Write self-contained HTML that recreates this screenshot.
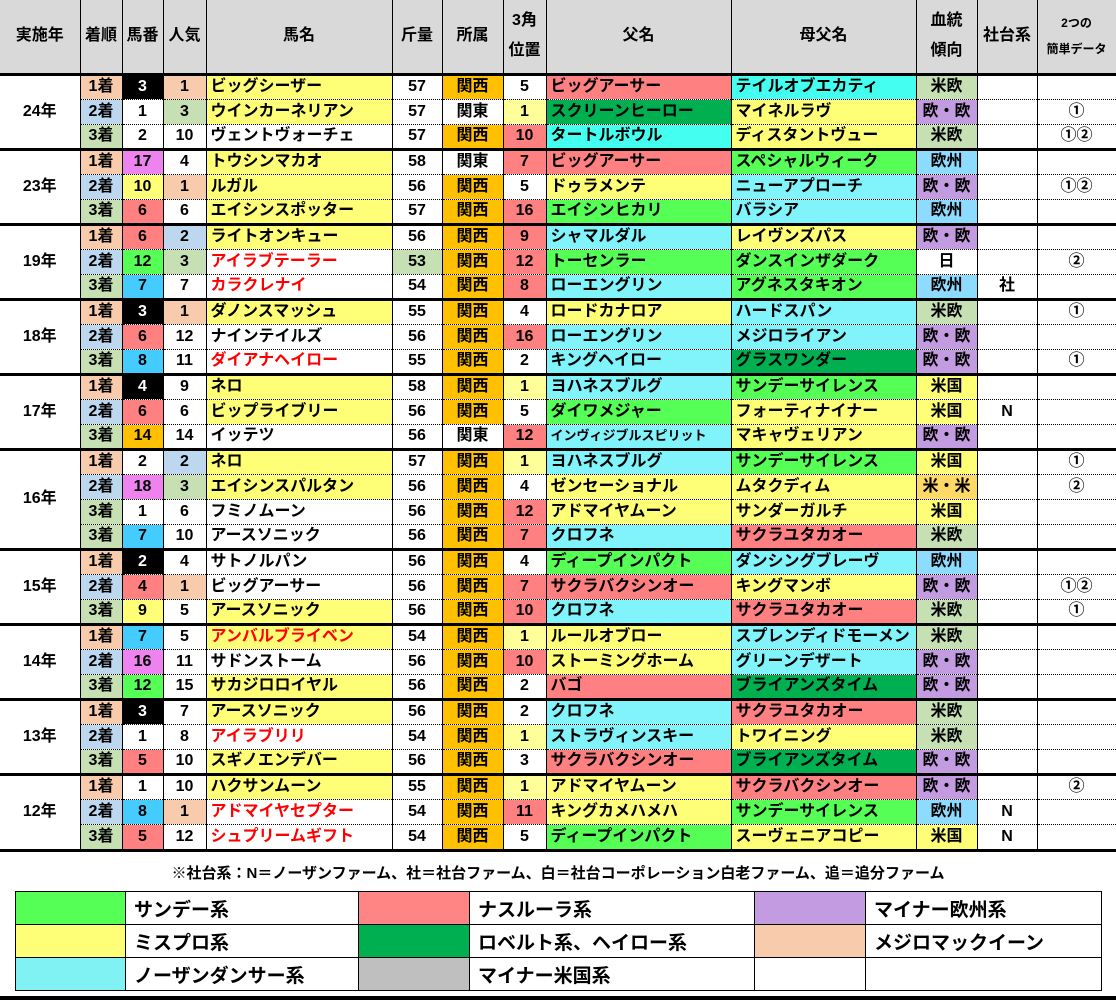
<!DOCTYPE html>
<html><head><meta charset="utf-8"><style>
*{margin:0;padding:0;box-sizing:border-box}
body{width:1116px;height:1001px;background:#fff;font-family:"Liberation Sans","Noto Sans CJK JP",sans-serif;font-weight:bold;color:#000;position:relative;overflow:hidden}
table.m{position:absolute;left:0;top:0;width:1116px;border-collapse:collapse;table-layout:fixed}
table.m td,table.m th{border-left:1px solid #000;border-right:1px solid #000;border-top:1px dotted #000;height:25px;font-size:16px;text-align:center;white-space:nowrap;overflow:hidden;padding:0;line-height:22px;background-color:#fff}
table.m th{background:#d9d9d9;height:74px;border-top:none;border-bottom:3px solid #000;line-height:30px}
table.m tr.gr td{border-top:3px solid #000}
table.m td.l{text-align:left;padding-left:4px}
table.m td.yr{background:#fff;border-left:none}
table.m th.yr{border-left:none}
table.m td.y{background:#ffff77}table.m td.r{background:#ff8080}table.m td.dg{background:#00b050}table.m td.c{background:#80f4fa}table.m td.c2{background:#44fff0}table.m td.g{background:#55ff55}
table.m td.s{background:#f8cbad}table.m td.b{background:#bdd7ee}table.m td.lg{background:#c6e0b4}table.m td.o{background:#ffc000}table.m td.pk{background:#ee82ee}table.m td.cy{background:#44ccff}
table.m td.bk{background:#000;color:#fff}table.m td.pu{background:#c39be0}table.m td.eu{background:#8ddcff}table.m td.ly{background:#ffff99}table.m td.lo{background:#ffd966}
.rd{color:#f00}
.sm{font-size:13px!important}
.note{position:absolute;top:862px;left:0;width:1116px;text-align:center;font-size:15px}
table.lg2{position:absolute;left:15px;top:891px;width:1086px;border-collapse:collapse;table-layout:fixed}
table.lg2 td{border:1px solid #000;height:33px;font-size:19px;padding-left:8px;white-space:nowrap}
.bot{position:absolute;left:0;top:996px;width:1116px;height:4px;background:#000}
.tl{position:absolute;left:0;top:849px;width:1116px;height:3px;background:#000}
</style></head><body>
<table class="m">
<colgroup><col style="width:80px"><col style="width:42px"><col style="width:41px"><col style="width:43px"><col style="width:186px"><col style="width:50px"><col style="width:61px"><col style="width:43px"><col style="width:185px"><col style="width:185px"><col style="width:61px"><col style="width:60px"><col style="width:79px"></colgroup>
<tr><th class="yr">実施年</th><th>着順</th><th>馬番</th><th>人気</th><th>馬名</th><th>斤量</th><th>所属</th><th>3角<br>位置</th><th>父名</th><th>母父名</th><th>血統<br>傾向</th><th>社台系</th><th style="font-size:12px;line-height:26px">2つの<br>簡単データ</th></tr>

<tr class="gr"><td class="yr" rowspan="3">24年</td><td class="s">1着</td><td class="bk">3</td><td class="s">1</td><td class="l y">ビッグシーザー</td><td>57</td><td class="o">関西</td><td>5</td><td class="l r">ビッグアーサー</td><td class="l c2">テイルオブエカティ</td><td class="lg">米欧</td><td></td><td></td></tr>
<tr><td class="b">2着</td><td>1</td><td class="lg">3</td><td class="l y">ウインカーネリアン</td><td>57</td><td>関東</td><td class="ly">1</td><td class="l dg">スクリーンヒーロー</td><td class="l y">マイネルラヴ</td><td class="pu">欧・欧</td><td></td><td>①</td></tr>
<tr><td class="lg">3着</td><td>2</td><td>10</td><td class="l">ヴェントヴォーチェ</td><td>57</td><td class="o">関西</td><td class="r">10</td><td class="l c2">タートルボウル</td><td class="l y">ディスタントヴュー</td><td class="lg">米欧</td><td></td><td>①②</td></tr>

<tr class="gr"><td class="yr" rowspan="3">23年</td><td class="s">1着</td><td class="pk">17</td><td>4</td><td class="l y">トウシンマカオ</td><td>58</td><td>関東</td><td class="r">7</td><td class="l r">ビッグアーサー</td><td class="l g">スペシャルウィーク</td><td class="eu">欧州</td><td></td><td></td></tr>
<tr><td class="b">2着</td><td class="y">10</td><td class="s">1</td><td class="l y">ルガル</td><td>56</td><td class="o">関西</td><td>5</td><td class="l y">ドゥラメンテ</td><td class="l c">ニューアプローチ</td><td class="pu">欧・欧</td><td></td><td>①②</td></tr>
<tr><td class="lg">3着</td><td class="r">6</td><td>6</td><td class="l y">エイシンスポッター</td><td>57</td><td class="o">関西</td><td class="r">16</td><td class="l g">エイシンヒカリ</td><td class="l c">バラシア</td><td class="eu">欧州</td><td></td><td></td></tr>

<tr class="gr"><td class="yr" rowspan="3">19年</td><td class="s">1着</td><td class="r">6</td><td class="b">2</td><td class="l y">ライトオンキュー</td><td>56</td><td class="o">関西</td><td class="r">9</td><td class="l c">シャマルダル</td><td class="l y">レイヴンズパス</td><td class="pu">欧・欧</td><td></td><td></td></tr>
<tr><td class="b">2着</td><td class="g">12</td><td class="lg">3</td><td class="l rd">アイラブテーラー</td><td class="lg">53</td><td class="o">関西</td><td class="r">12</td><td class="l g">トーセンラー</td><td class="l g">ダンスインザダーク</td><td>日</td><td></td><td>②</td></tr>
<tr><td class="lg">3着</td><td class="cy">7</td><td>7</td><td class="l rd">カラクレナイ</td><td>54</td><td class="o">関西</td><td class="r">8</td><td class="l c">ローエングリン</td><td class="l g">アグネスタキオン</td><td class="eu">欧州</td><td>社</td><td></td></tr>

<tr class="gr"><td class="yr" rowspan="3">18年</td><td class="s">1着</td><td class="bk">3</td><td class="s">1</td><td class="l y">ダノンスマッシュ</td><td>55</td><td class="o">関西</td><td>4</td><td class="l y">ロードカナロア</td><td class="l c">ハードスパン</td><td class="lg">米欧</td><td></td><td>①</td></tr>
<tr><td class="b">2着</td><td class="r">6</td><td>12</td><td class="l">ナインテイルズ</td><td>56</td><td class="o">関西</td><td class="r">16</td><td class="l c">ローエングリン</td><td class="l c">メジロライアン</td><td class="pu">欧・欧</td><td></td><td></td></tr>
<tr><td class="lg">3着</td><td class="cy">8</td><td>11</td><td class="l rd">ダイアナヘイロー</td><td>55</td><td class="o">関西</td><td>2</td><td class="l c">キングヘイロー</td><td class="l dg">グラスワンダー</td><td class="pu">欧・欧</td><td></td><td>①</td></tr>

<tr class="gr"><td class="yr" rowspan="3">17年</td><td class="s">1着</td><td class="bk">4</td><td>9</td><td class="l y">ネロ</td><td>58</td><td class="o">関西</td><td class="ly">1</td><td class="l c">ヨハネスブルグ</td><td class="l g">サンデーサイレンス</td><td class="y">米国</td><td></td><td></td></tr>
<tr><td class="b">2着</td><td class="r">6</td><td>6</td><td class="l y">ビップライブリー</td><td>56</td><td class="o">関西</td><td>5</td><td class="l g">ダイワメジャー</td><td class="l y">フォーティナイナー</td><td class="y">米国</td><td>N</td><td></td></tr>
<tr><td class="lg">3着</td><td class="o">14</td><td>14</td><td class="l">イッテツ</td><td>56</td><td>関東</td><td class="r">12</td><td class="l c sm">インヴィジブルスピリット</td><td class="l y">マキャヴェリアン</td><td class="pu">欧・欧</td><td></td><td></td></tr>

<tr class="gr"><td class="yr" rowspan="4">16年</td><td class="s">1着</td><td>2</td><td class="b">2</td><td class="l y">ネロ</td><td>57</td><td class="o">関西</td><td class="ly">1</td><td class="l c">ヨハネスブルグ</td><td class="l g">サンデーサイレンス</td><td class="y">米国</td><td></td><td>①</td></tr>
<tr><td class="b">2着</td><td class="pk">18</td><td class="lg">3</td><td class="l y">エイシンスパルタン</td><td>56</td><td class="o">関西</td><td>4</td><td class="l y">ゼンセーショナル</td><td class="l y">ムタクディム</td><td class="lo">米・米</td><td></td><td>②</td></tr>
<tr><td class="lg">3着</td><td>1</td><td>6</td><td class="l">フミノムーン</td><td>56</td><td class="o">関西</td><td class="r">12</td><td class="l y">アドマイヤムーン</td><td class="l y">サンダーガルチ</td><td class="y">米国</td><td></td><td></td></tr>
<tr><td class="lg">3着</td><td class="cy">7</td><td>10</td><td class="l">アースソニック</td><td>56</td><td class="o">関西</td><td class="r">7</td><td class="l c">クロフネ</td><td class="l r">サクラユタカオー</td><td class="lg">米欧</td><td></td><td></td></tr>

<tr class="gr"><td class="yr" rowspan="3">15年</td><td class="s">1着</td><td class="bk">2</td><td>4</td><td class="l">サトノルパン</td><td>56</td><td class="o">関西</td><td>4</td><td class="l g">ディープインパクト</td><td class="l c">ダンシングブレーヴ</td><td class="eu">欧州</td><td></td><td></td></tr>
<tr><td class="b">2着</td><td class="r">4</td><td class="s">1</td><td class="l">ビッグアーサー</td><td>56</td><td class="o">関西</td><td class="r">7</td><td class="l r">サクラバクシンオー</td><td class="l y">キングマンボ</td><td class="pu">欧・欧</td><td></td><td>①②</td></tr>
<tr><td class="lg">3着</td><td class="y">9</td><td>5</td><td class="l y">アースソニック</td><td>56</td><td class="o">関西</td><td class="r">10</td><td class="l c">クロフネ</td><td class="l r">サクラユタカオー</td><td class="lg">米欧</td><td></td><td>①</td></tr>

<tr class="gr"><td class="yr" rowspan="3">14年</td><td class="s">1着</td><td class="cy">7</td><td>5</td><td class="l y rd">アンバルブライベン</td><td>54</td><td class="o">関西</td><td class="ly">1</td><td class="l y">ルールオブロー</td><td class="l c">スプレンディドモーメン</td><td class="lg">米欧</td><td></td><td></td></tr>
<tr><td class="b">2着</td><td class="pk">16</td><td>11</td><td class="l">サドンストーム</td><td>56</td><td class="o">関西</td><td class="r">10</td><td class="l y">ストーミングホーム</td><td class="l c">グリーンデザート</td><td class="pu">欧・欧</td><td></td><td></td></tr>
<tr><td class="lg">3着</td><td class="g">12</td><td>15</td><td class="l y">サカジロロイヤル</td><td>56</td><td class="o">関西</td><td>2</td><td class="l r">バゴ</td><td class="l dg">ブライアンズタイム</td><td class="pu">欧・欧</td><td></td><td></td></tr>

<tr class="gr"><td class="yr" rowspan="3">13年</td><td class="s">1着</td><td class="bk">3</td><td>7</td><td class="l y">アースソニック</td><td>56</td><td class="o">関西</td><td>2</td><td class="l c">クロフネ</td><td class="l r">サクラユタカオー</td><td class="lg">米欧</td><td></td><td></td></tr>
<tr><td class="b">2着</td><td>1</td><td>8</td><td class="l rd">アイラブリリ</td><td>54</td><td class="o">関西</td><td class="ly">1</td><td class="l c">ストラヴィンスキー</td><td class="l y">トワイニング</td><td class="lg">米欧</td><td></td><td></td></tr>
<tr><td class="lg">3着</td><td class="r">5</td><td>10</td><td class="l y">スギノエンデバー</td><td>56</td><td class="o">関西</td><td>3</td><td class="l r">サクラバクシンオー</td><td class="l dg">ブライアンズタイム</td><td class="pu">欧・欧</td><td></td><td></td></tr>

<tr class="gr"><td class="yr" rowspan="3">12年</td><td class="s">1着</td><td>1</td><td>10</td><td class="l y">ハクサンムーン</td><td>55</td><td class="o">関西</td><td class="ly">1</td><td class="l y">アドマイヤムーン</td><td class="l r">サクラバクシンオー</td><td class="pu">欧・欧</td><td></td><td>②</td></tr>
<tr><td class="b">2着</td><td class="cy">8</td><td class="s">1</td><td class="l rd">アドマイヤセプター</td><td>54</td><td class="o">関西</td><td class="r">11</td><td class="l y">キングカメハメハ</td><td class="l g">サンデーサイレンス</td><td class="eu">欧州</td><td>N</td><td></td></tr>
<tr><td class="lg">3着</td><td class="r">5</td><td>12</td><td class="l rd">シュプリームギフト</td><td>54</td><td class="o">関西</td><td>5</td><td class="l g">ディープインパクト</td><td class="l y">スーヴェニアコピー</td><td class="y">米国</td><td>N</td><td></td></tr>
</table>
<div class="tl"></div>
<div class="note">※社台系：N＝ノーザンファーム、社＝社台ファーム、白＝社台コーポレーション白老ファーム、追＝追分ファーム</div>
<table class="lg2">
<colgroup><col style="width:110px"><col style="width:233px"><col style="width:111px"><col style="width:285px"><col style="width:111px"><col style="width:236px"></colgroup>
<tr><td style="background:#55ff55"></td><td>サンデー系</td><td style="background:#ff8585"></td><td>ナスルーラ系</td><td style="background:#c39be0"></td><td>マイナー欧州系</td></tr>
<tr><td style="background:#ffff77"></td><td>ミスプロ系</td><td style="background:#00b050"></td><td>ロベルト系、ヘイロー系</td><td style="background:#f8cbad"></td><td>メジロマックイーン</td></tr>
<tr><td style="background:#80f2f4"></td><td>ノーザンダンサー系</td><td style="background:#bfbfbf"></td><td>マイナー米国系</td><td></td><td></td></tr>
</table>
<div class="bot"></div>
</body></html>
